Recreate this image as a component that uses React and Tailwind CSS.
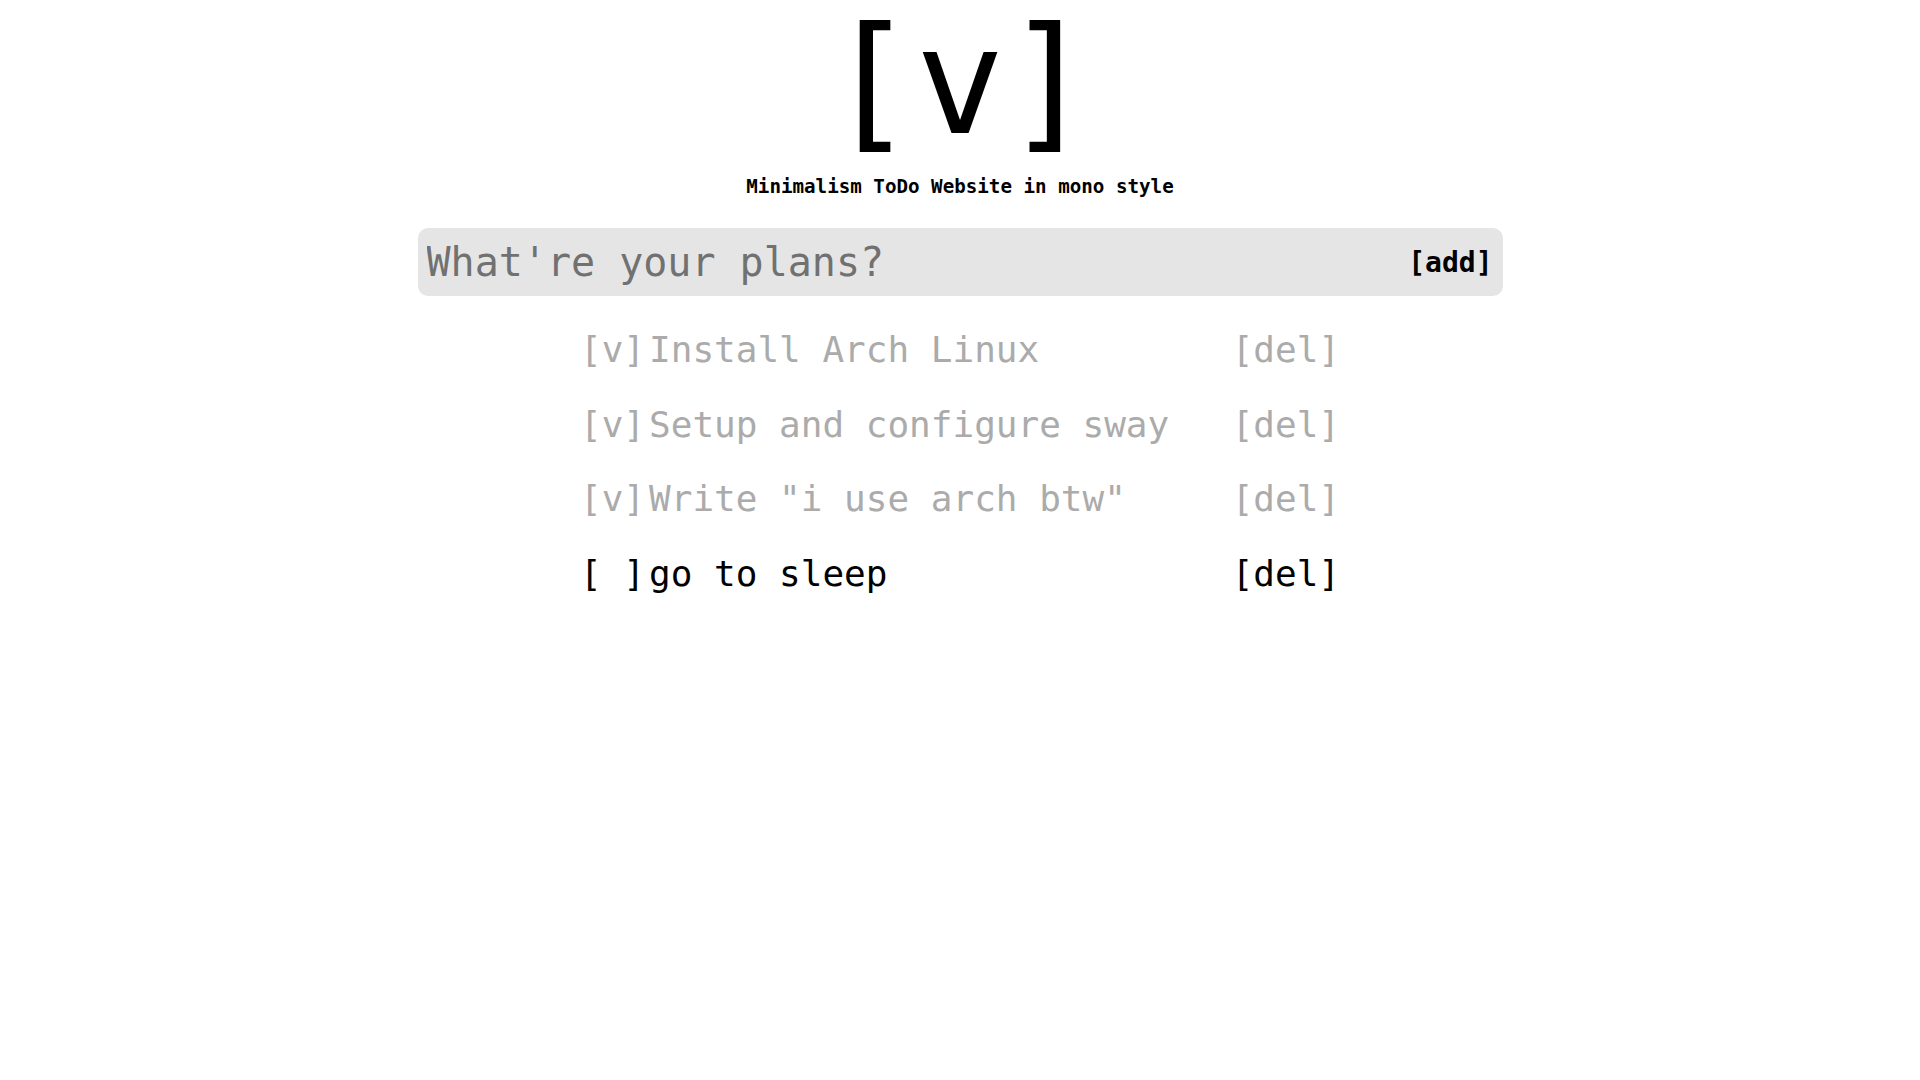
import { useState } from 'react';

const initialTodos = [
  { id: 1, text: 'Install Arch Linux', done: true },
  { id: 2, text: 'Setup and configure sway', done: true },
  { id: 3, text: 'Write "i use arch btw"', done: true },
  { id: 4, text: 'go to sleep', done: false },
];

export default function App() {
  const [todos, setTodos] = useState(initialTodos);
  const [text, setText] = useState('');

  const addTodo = (e) => {
    e.preventDefault();
    if (!text.trim()) return;
    setTodos([...todos, { id: Date.now(), text: text.trim(), done: false }]);
    setText('');
  };

  const toggle = (id) =>
    setTodos(todos.map((t) => (t.id === id ? { ...t, done: !t.done } : t)));

  const remove = (id) => setTodos(todos.filter((t) => t.id !== id));

  return (
    <div className="min-h-screen bg-white text-black font-['DejaVu_Sans_Mono',monospace] flex flex-col items-center overflow-hidden">
      <h1 className="mt-[-4px] text-[148px] leading-[172px]">[v]</h1>
      <h3 className="mt-[8px] text-[19.2px] font-bold leading-[22.4px]">
        Minimalism ToDo Website in mono style
      </h3>

      <form
        onSubmit={addTodo}
        className="mt-[30px] w-[1085px] h-[68px] bg-[#e5e5e5] rounded-[10px] flex items-center justify-between pl-[9px] pr-[10px]"
      >
        <input
          value={text}
          onChange={(e) => setText(e.target.value)}
          placeholder="What're your plans?"
          className="flex-1 bg-transparent outline-none text-[40px] leading-[47px] placeholder:text-[#717171]"
        />
        <button type="submit" className="text-[28px] font-bold leading-[33px]">
          [add]
        </button>
      </form>

      <ul className="mt-[33px] w-[760px] flex flex-col gap-[32.5px]">
        {todos.map((todo) => (
          <li
            key={todo.id}
            className={
              'flex items-center justify-between text-[36px] leading-[42px] ' +
              (todo.done ? 'text-[#ababab]' : 'text-black')
            }
          >
            <div className="flex items-center gap-[4px]">
              <button onClick={() => toggle(todo.id)}>{todo.done ? '[v]' : '[ ]'}</button>
              <span className="whitespace-pre">{todo.text}</span>
            </div>
            <button onClick={() => remove(todo.id)}>[del]</button>
          </li>
        ))}
      </ul>
    </div>
  );
}
